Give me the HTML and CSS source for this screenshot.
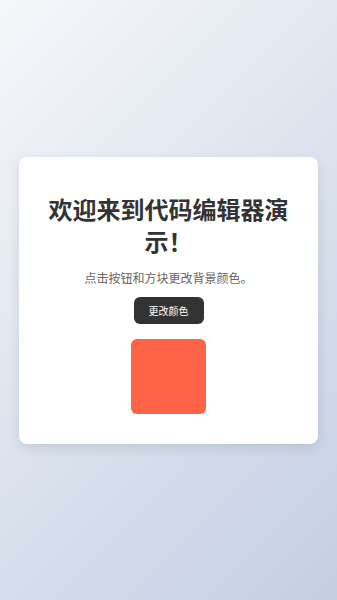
FILE: index.html
```html
<!DOCTYPE html>
<html lang="zh-CN">
<head>
  <meta charset="UTF-8">
  <meta name="viewport" content="width=device-width, initial-scale=1.0">
  <title>代码编辑器演示</title>
  <link rel="stylesheet" href="styles.css">
</head>
<body>
  <div class="container">
    <h1>欢迎来到代码编辑器演示！</h1>
    <p class="desc">点击按钮和方块更改背景颜色。</p>
    <button id="changeColor" class="btn">更改颜色</button>
    <div id="box" class="box"></div>
  </div>
  <script>
    const btn = document.getElementById('changeColor');
    const box = document.getElementById('box');
    const colors = ['#ff6347', '#4caf50', '#2196f3', '#ffc107', '#9c27b0'];
    let idx = 0;

    function nextColor() {
      idx = (idx + 1) % colors.length;
      document.body.style.background = colors[idx];
    }

    btn.addEventListener('click', nextColor);
    box.addEventListener('click', () => {
      box.style.backgroundColor = colors[(idx + 2) % colors.length];
    });
  </script>
</body>
</html>
```

FILE: styles.css
```css
html, body {
  margin: 0;
  padding: 0;
}

body {
  font-family: "Noto Sans CJK SC", "Noto Sans", sans-serif;
  background: linear-gradient(135deg, #f5f7fa 0%, #c3cfe2 100%);
  min-height: 100vh;
  display: flex;
  align-items: center;
  justify-content: center;
}

.container {
  width: 299px;
  box-sizing: border-box;
  padding: 20px;
  background-color: #fff;
  border-radius: 8px;
  box-shadow: 0 4px 12px rgba(0, 0, 0, 0.1);
  text-align: center;
}

h1 {
  font-size: 24px;
  line-height: 32px;
  font-weight: bold;
  color: #333;
  margin: 16px 0 12px;
}

.desc {
  font-size: 12px;
  line-height: 18px;
  color: #666;
  margin: 0 0 9px;
}

.btn {
  font-family: inherit;
  font-size: 10px;
  line-height: 15px;
  padding: 6px 15px;
  background-color: #333;
  color: #fff;
  border: none;
  border-radius: 6px;
  cursor: pointer;
}

.box {
  width: 75px;
  height: 75px;
  margin: 15px auto 10px;
  background-color: #ff6347;
  border-radius: 6px;
  cursor: pointer;
}
```
